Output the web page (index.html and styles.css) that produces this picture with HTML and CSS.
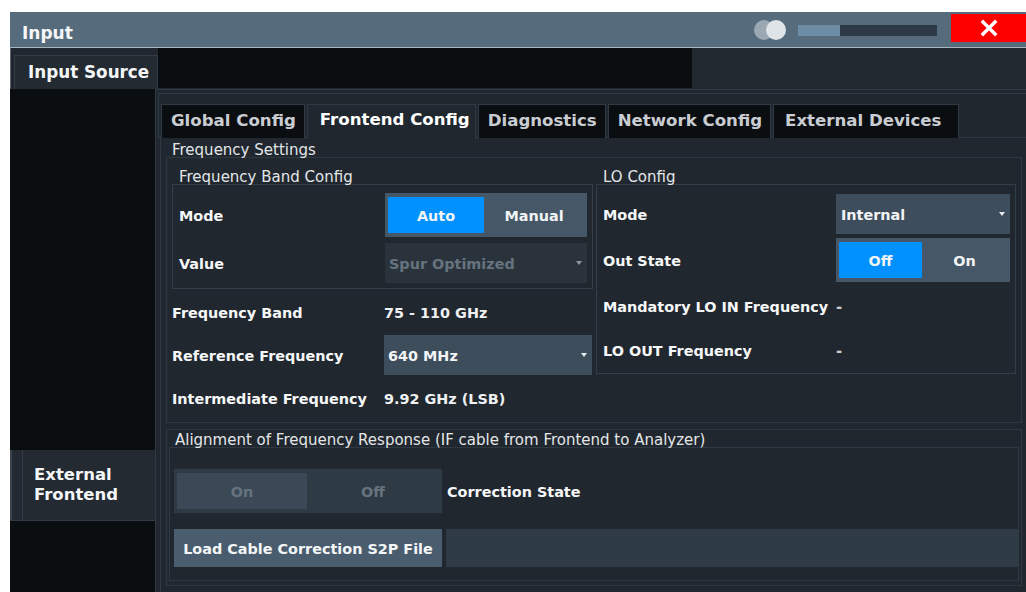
FILE: index.html
```html
<!DOCTYPE html>
<html>
<head>
<meta charset="utf-8">
<link rel="stylesheet" href="styles.css">
</head>
<body>
<div class="window">
  <div class="titlebar">
    <span class="title">Input</span>
    <div class="title-tools">
      <span class="dots"><i class="dot back"></i><i class="dot front"></i></span>
      <span class="progress"><span class="progress-fill"></span></span>
      <span class="close">
        <svg width="18" height="18" viewBox="0 0 18 18"><path d="M3 3L15 15M15 3L3 15" stroke="#fff" stroke-width="3.4" stroke-linecap="square"/></svg>
      </span>
    </div>
  </div>

  <div class="source-row">
    <div class="side-tab top-tab">Input Source</div>
    <div class="source-strip"></div>
    <div class="source-rest"></div>
  </div>

  <div class="body">
    <div class="sidebar">
      <div class="side-fill"></div>
      <div class="side-tab ext-tab"><span>External<br>Frontend</span></div>
      <div class="side-fill bottom"></div>
    </div>

    <div class="main">
      <div class="tabs">
        <div class="tab">Global Config</div>
        <div class="tab active">Frontend Config</div>
        <div class="tab">Diagnostics</div>
        <div class="tab">Network Config</div>
        <div class="tab">External Devices</div>
      </div>

      <div class="page">
        <div class="legend">Frequency Settings</div>
        <div class="group freq-settings">
          <div class="col left-col">
            <div class="legend sub">Frequency Band Config</div>
            <div class="box band-box">
              <div class="row">
                <span class="label">Mode</span>
                <div class="toggle">
                  <span class="opt on">Auto</span>
                  <span class="opt">Manual</span>
                </div>
              </div>
              <div class="row">
                <span class="label">Value</span>
                <div class="select disabled"><span>Spur Optimized</span><i class="arrow"></i></div>
              </div>
            </div>
            <div class="plain-rows">
              <div class="row plain">
                <span class="label">Frequency Band</span>
                <span class="value">75 - 110 GHz</span>
              </div>
              <div class="row plain">
                <span class="label">Reference Frequency</span>
                <div class="select wide"><span>640 MHz</span><i class="arrow"></i></div>
              </div>
              <div class="row plain">
                <span class="label">Intermediate Frequency</span>
                <span class="value">9.92 GHz (LSB)</span>
              </div>
            </div>
          </div>

          <div class="col right-col">
            <div class="legend sub">LO Config</div>
            <div class="box lo-box">
              <div class="row lo mode">
                <span class="label">Mode</span>
                <div class="select lo-select"><span>Internal</span><i class="arrow"></i></div>
              </div>
              <div class="row lo state">
                <span class="label">Out State</span>
                <div class="toggle lo-toggle">
                  <span class="opt on">Off</span>
                  <span class="opt">On</span>
                </div>
              </div>
              <div class="row lo">
                <span class="label">Mandatory LO IN Frequency</span>
                <span class="dash">-</span>
              </div>
              <div class="row lo">
                <span class="label">LO OUT Frequency</span>
                <span class="dash">-</span>
              </div>
            </div>
          </div>
        </div>

        <div class="group align">
          <div class="align-head">Alignment of Frequency Response (IF cable from Frontend to Analyzer)</div>
          <div class="align-body">
            <div class="align-row">
              <div class="toggle dim">
                <span class="opt on">On</span>
                <span class="opt">Off</span>
              </div>
              <span class="label">Correction State</span>
            </div>
            <div class="align-row load">
              <span class="button">Load Cable Correction S2P File</span>
              <span class="path"></span>
            </div>
          </div>
        </div>
      </div>
    </div>
  </div>
</div>
</body>
</html>
```

FILE: styles.css
```css
* { box-sizing: border-box; }

html, body {
  margin: 0;
  background: #ffffff;
  font-family: "DejaVu Sans", Verdana, sans-serif;
  font-size: 15px;
  color: #f2f4f6;
}

.window {
  margin: 12px 0 0 10px;
  width: 1016px;
  height: 580px;
  background: #21272e;
  display: flex;
  flex-direction: column;
  overflow: hidden;
}

/* ---------- title bar ---------- */
.titlebar {
  height: 36px;
  flex: none;
  background: #566b7c;
  border-bottom: 1px solid #aab5be;
  display: flex;
  align-items: flex-start;
  justify-content: space-between;
  padding-left: 12px;
}
.title {
  font-weight: bold;
  font-size: 17px;
  line-height: 20px;
  margin-top: 11px;
  color: #f4f6f8;
}
.title-tools {
  display: flex;
  align-items: flex-start;
}
.dots {
  position: relative;
  width: 33px;
  height: 21px;
  margin: 8px 11px 0 0;
}
.dot {
  position: absolute;
  top: 0;
  width: 20px;
  height: 20px;
  border-radius: 50%;
}
.dot.back { left: 0; background: #9ba7b1; }
.dot.front { left: 12px; background: #dfe4e8; }
.progress {
  width: 139px;
  height: 11px;
  margin-top: 13px;
  background: #2d3a45;
  margin-right: 14px;
  display: flex;
}
.progress-fill {
  width: 42px;
  background: #6d8da6;
}
.close {
  width: 75px;
  height: 28px;
  margin-top: 2px;
  background: #ff0000;
  display: flex;
  align-items: center;
  justify-content: center;
}

/* ---------- source row ---------- */
.source-row {
  height: 41px;
  flex: none;
  display: flex;
  border-left: 1px solid #5c666f;
}
.side-tab {
  background: #232a31;
  font-weight: bold;
  color: #f4f6f8;
}
.top-tab {
  width: 144px;
  flex: none;
  margin-left: 3px;
  margin-top: 7px;
  border: 1px solid #323c46;
  border-bottom: none;
  font-size: 16.8px;
  line-height: 20px;
  padding: 6px 0 0 13px;
}
.source-strip {
  width: 534px;
  flex: none;
  background: #0a0d10;
  margin-bottom: 1px;
}
.source-rest {
  flex: 1;
  background: #22282f;
}

/* ---------- body ---------- */
.body {
  flex: 1;
  display: flex;
  min-height: 0;
}
.sidebar {
  width: 145px;
  flex: none;
  display: flex;
  flex-direction: column;
}
.side-fill {
  height: 361px;
  background: #0b0e11;
  flex: none;
}
.side-fill.bottom {
  flex: 1;
  height: auto;
  border-top: 1px solid #323c46;
}
.ext-tab {
  height: 70px;
  flex: none;
  border-left: 2px solid #3a444e;
  padding-left: 10px;
  font-size: 16.5px;
  line-height: 20px;
}
.ext-tab span {
  display: block;
  height: 100%;
  border-left: 1px solid #323c46;
  padding: 15px 0 0 11px;
}

.main {
  flex: 1;
  border-top: 1px solid #2e3943;
  border-left: 1px solid #2e3943;
  display: flex;
  flex-direction: column;
  padding: 3px 0 0 2px;
}

/* ---------- tabs ---------- */
.tabs {
  display: flex;
  border-top: 1px solid #2e3943;
  border-left: 1px solid #2e3943;
  border-bottom: 1px solid #2e3943;
  padding: 10px 0 0 2px;
  height: 45px;
  flex: none;
}
.tab {
  background: #0b0e11;
  border: 1px solid #2f3a44;
  border-bottom: none;
  margin-right: 2px;
  font-weight: bold;
  font-size: 16.6px;
  line-height: 20px;
  color: #c9cdd1;
  padding: 6px 8px 0 9px;
  height: 34px;
}
.tab:last-child { padding: 6px 17px 0 11px; }
.tab.active {
  background: #21272e;
  color: #ffffff;
  padding: 5px 5px 0 12px;
  margin-bottom: -1px;
  height: 35px;
}

/* ---------- page ---------- */
.page {
  flex: 1;
  border-left: 1px solid #2e3943;
  margin-left: 2px;
  padding: 1px 4px 0 5px;
}
.legend {
  font-size: 15px;
  color: #e3e6e9;
  padding: 3px 0 0 6px;
  height: 18px;
  line-height: 17px;
}
.legend.sub { padding: 3px 0 0 7px; height: 19px; line-height: 18px; }

.group {
  border: 1px solid #2e3943;
}
.freq-settings {
  height: 266px;
  display: flex;
  padding: 7px 5px 0 5px;
  gap: 3px;
}
.left-col { width: 421px; flex: none; }
.right-col { flex: 1; }

.box {
  border: 1px solid #323e48;
}
.band-box {
  height: 105px;
  padding: 8px 5px 0 6px;
}
.lo-box {
  height: 190px;
  padding: 9px 5px 0 6px;
}

.row {
  display: flex;
  align-items: center;
  justify-content: space-between;
  height: 44px;
  margin-bottom: 4px;
}
.row.plain {
  height: 43px;
  margin: 0;
  justify-content: flex-start;
}
.plain-rows { padding-top: 1px; }
.row.plain .label { width: 212px; flex: none; }
.row.lo { margin-bottom: 0; }
.row.lo.mode { height: 40px; margin-bottom: 4px; }
.row.lo.state { margin-bottom: 2px; }

.label, .value, .opt, .select span, .button, .dash {
  padding-top: 2px;
}
.label {
  font-weight: bold;
  font-size: 14.4px;
  color: #f6f7f8;
}
.value {
  font-weight: bold;
  font-size: 14.4px;
  color: #eef0f2;
}
.dash {
  width: 174px;
  color: #c9ced2;
  font-weight: bold;
}

/* ---------- controls ---------- */
.toggle {
  width: 202px;
  height: 44px;
  background: #465868;
  padding: 4px 3px;
  display: flex;
}
.opt {
  flex: 1;
  display: flex;
  align-items: center;
  justify-content: center;
  font-weight: bold;
  font-size: 14.4px;
  color: #f2f4f6;
}
.opt.on { background: #0091ff; flex: none; width: 96px; }
.lo-toggle { width: 174px; }
.lo-toggle .opt.on { width: 83px; }

.select {
  width: 202px;
  height: 40px;
  background: #3d4d5b;
  display: flex;
  align-items: center;
  justify-content: space-between;
  padding: 0 5px 0 4px;
  font-weight: bold;
  font-size: 14.4px;
  color: #f2f4f6;
}
.select.disabled {
  background: #2a333c;
  color: #66737f;
}
.select.wide { width: 208px; }
.lo-select { width: 174px; padding-left: 5px; }
.arrow {
  width: 0;
  height: 0;
  border-left: 3.5px solid transparent;
  border-right: 3.5px solid transparent;
  border-top: 4px solid #e8ebee;
}
.select.disabled .arrow { border-top-color: #8c97a1; }

/* ---------- alignment ---------- */
.align {
  margin-top: 6px;
  height: 157px;
  display: flex;
  flex-direction: column;
  padding: 0 2px 0 2px;
}
.align-head {
  height: 18px;
  line-height: 16px;
  font-size: 15px;
  color: #e3e6e9;
  padding: 2px 0 0 6px;
  border-bottom: 1px solid #2e3943;
}
.align-body {
  flex: 1;
  margin: 0 0 4px 0;
  border: 1px solid #2e3943;
  border-top: none;
  padding: 21px 0 0 4px;
}
.align-row {
  display: flex;
  align-items: center;
}
.align-row .label { margin-left: 5px; }
.toggle.dim {
  width: 268px;
  height: 44px;
  background: #2e3a44;
  padding: 4px 3px 4px 3px;
}
.toggle.dim .opt { color: #66737f; }
.toggle.dim .opt.on { background: #3a4955; width: 130px; }
.align-row.load { margin-top: 16px; height: 38px; }
.button {
  width: 268px;
  height: 38px;
  background: #4a5d6e;
  display: flex;
  align-items: center;
  justify-content: center;
  font-weight: bold;
  font-size: 14.4px;
  color: #f4f6f8;
}
.path {
  flex: 1;
  height: 38px;
  margin-left: 4px;
  background: #2e3a44;
}
```
